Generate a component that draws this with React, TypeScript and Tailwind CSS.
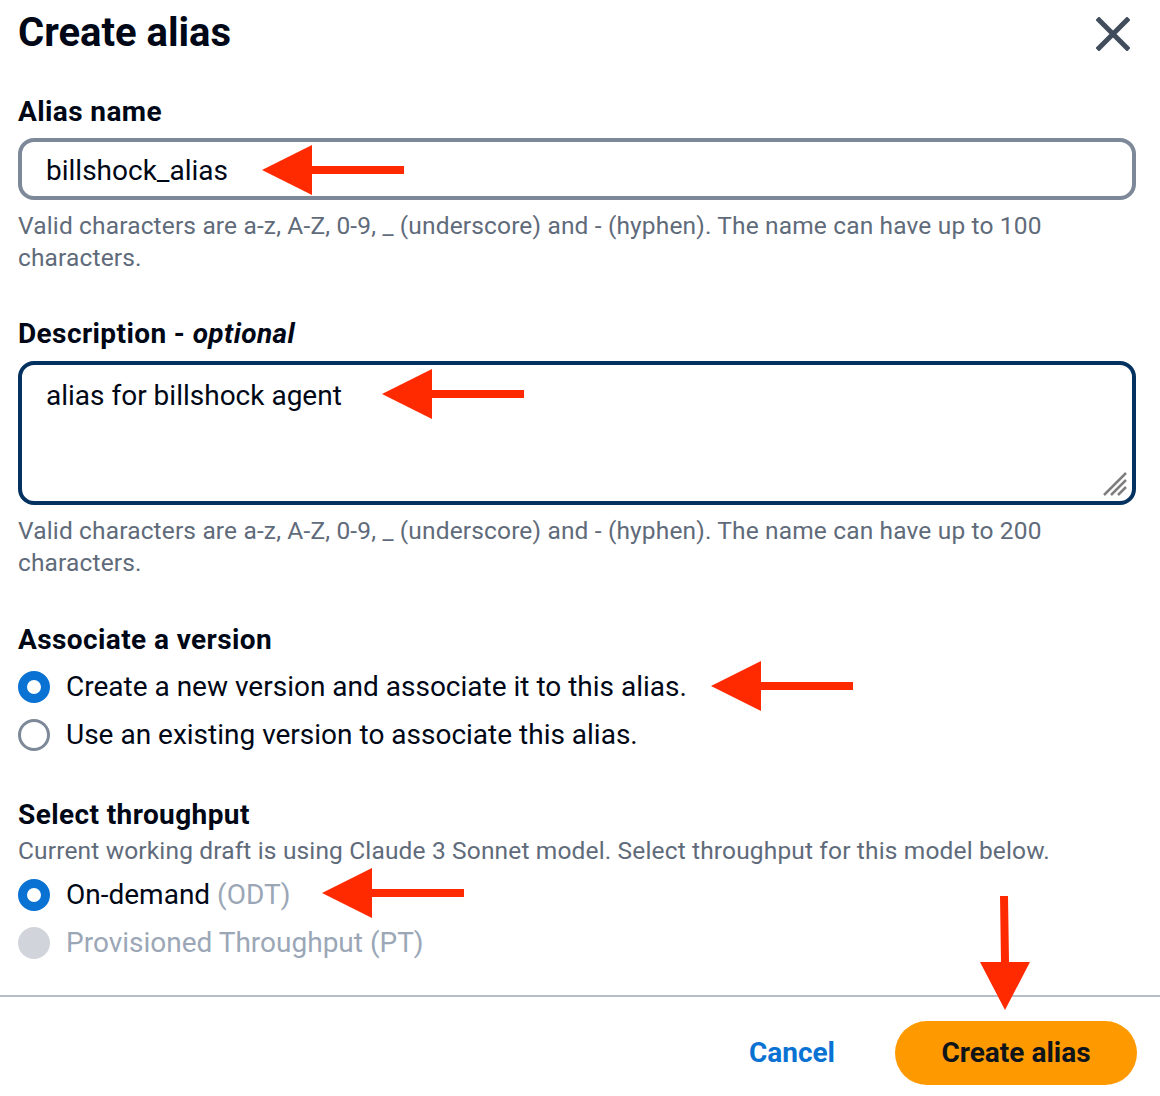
import React from 'react';

const FONT = "font-['Roboto','Noto_Sans',sans-serif]";

// red annotation arrow pointing left, tip at (0, h/2)
const LeftArrow = ({ className }: { className: string }) => (
  <svg className={`absolute ${className}`} width="144" height="50" viewBox="0 0 144 50">
    <polygon points="0,25 50,0 50,21 142,21 142,29 50,29 50,50" fill="#ff2a00" />
  </svg>
);

const Radio = ({ state }: { state: 'on' | 'off' | 'disabled' }) => {
  if (state === 'on')
    return <span className="w-[32px] h-[32px] rounded-full border-[9px] border-[#0972d3] bg-white shrink-0" />;
  if (state === 'off')
    return <span className="w-[32px] h-[32px] rounded-full border-[3px] border-[#7d8998] bg-white shrink-0" />;
  return <span className="w-[32px] h-[32px] rounded-full bg-[#d1d5db] shrink-0" />;
};

const Help = ({ children }: { children: React.ReactNode }) => (
  <p className="text-[24.5px] leading-[32px] text-[#5f6b7a] mt-[10px] tracking-[0.15px]">{children}</p>
);

const Label = ({ children, className = '' }: { children: React.ReactNode; className?: string }) => (
  <div className={`text-[28px] leading-[32px] font-bold tracking-[0.4px] ${className}`}>{children}</div>
);

export default function App() {
  return (
    <div className={`${FONT} relative w-[1160px] h-[1096px] bg-white text-[#000716] overflow-hidden`}>
      <div className="pl-[18px] pr-[24px]">
        {/* Header */}
        <div className="flex items-start justify-between pt-[8px]">
          <h1 className="text-[40px] leading-[50px] font-bold">Create alias</h1>
          <button className="mt-[9px] mr-[6px] text-[#414d5c]">
            <svg width="34" height="34" viewBox="0 0 34 34">
              <path d="M3 3 L31 31 M31 3 L3 31" stroke="currentColor" strokeWidth="5" strokeLinecap="square" />
            </svg>
          </button>
        </div>

        {/* Alias name */}
        <Label className="mt-[38px]">Alias name</Label>
        <div className="mt-[10px] h-[62px] rounded-[16px] border-[4px] border-[#7d8998] flex items-center pl-[24px] pt-[4px] text-[28px]">
          billshock_alias
        </div>
        <Help>
          Valid characters are a-z, A-Z, 0-9, _ (underscore) and - (hyphen). The name can have up to 100 characters.
        </Help>

        {/* Description */}
        <Label className="mt-[44px]">
          Description - <i>optional</i>
        </Label>
        <div className="relative mt-[11px] h-[144px] rounded-[16px] border-[4px] border-[#033160] pl-[24px] pt-[14px] text-[28px] leading-[34px]">
          alias for billshock agent
          <svg className="absolute right-[4px] bottom-[4px]" width="26" height="26" viewBox="0 0 26 26">
            <path d="M2 24 L24 2 M9 24 L24 9 M16 24 L24 16" stroke="#7f7f7f" strokeWidth="2.5" />
          </svg>
        </div>
        <Help>
          Valid characters are a-z, A-Z, 0-9, _ (underscore) and - (hyphen). The name can have up to 200 characters.
        </Help>

        {/* Associate a version */}
        <Label className="mt-[45px]">Associate a version</Label>
        <div className="mt-[15px] flex flex-col gap-[16px] text-[28px] leading-[32px]">
          <div className="flex items-center gap-[16px]">
            <Radio state="on" />
            <span>Create a new version and associate it to this alias.</span>
          </div>
          <div className="flex items-center gap-[16px]">
            <Radio state="off" />
            <span>Use an existing version to associate this alias.</span>
          </div>
        </div>

        {/* Select throughput */}
        <Label className="mt-[48px]">Select throughput</Label>
        <p className="mt-[4px] text-[24.5px] leading-[32px] text-[#5f6b7a] tracking-[0.15px]">
          Current working draft is using Claude 3 Sonnet model. Select throughput for this model below.
        </p>
        <div className="mt-[12px] flex flex-col gap-[16px] text-[28px] leading-[32px]">
          <div className="flex items-center gap-[16px]">
            <Radio state="on" />
            <span>
              On-demand <span className="text-[#9ba7b6]">(ODT)</span>
            </span>
          </div>
          <div className="flex items-center gap-[16px] text-[#9ba7b6]">
            <Radio state="disabled" />
            <span>Provisioned Throughput (PT)</span>
          </div>
        </div>
      </div>

      {/* Footer */}
      <div className="mt-[36px] border-t-[2px] border-[#b6bec9] flex items-center justify-end gap-[60px] pt-[24px] pr-[23px]">
        <button className="text-[28px] font-bold text-[#0972d3]">Cancel</button>
        <button className="h-[64px] w-[242px] rounded-full bg-[#ff9900] text-[28px] font-bold text-[#0f141a]">
          Create alias
        </button>
      </div>

      {/* Red annotation arrows */}
      <LeftArrow className="left-[262px] top-[145px]" />
      <LeftArrow className="left-[382px] top-[369px]" />
      <LeftArrow className="left-[711px] top-[661px]" />
      <LeftArrow className="left-[322px] top-[868px]" />
      <svg className="absolute left-[978px] top-[896px]" width="54" height="116" viewBox="0 0 54 116">
        <polygon points="22,0 30,0 31,66 52,66 27,114 2,66 23,66" fill="#ff2a00" />
      </svg>
    </div>
  );
}
